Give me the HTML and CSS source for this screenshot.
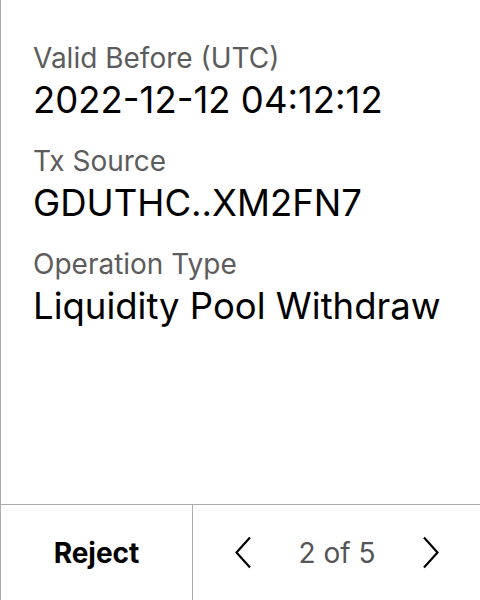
FILE: index.html
```html
<!DOCTYPE html>
<html>
<head>
<meta charset="utf-8">
<link rel="stylesheet" href="styles.css">
</head>
<body>
<div class="screen">
  <div class="details">
    <div class="field">
      <div class="label">Valid Before (UTC)</div>
      <div class="value">2022-12-12 04:12:12</div>
    </div>
    <div class="field">
      <div class="label">Tx Source</div>
      <div class="value">GDUTHC..XM2FN7</div>
    </div>
    <div class="field">
      <div class="label">Operation Type</div>
      <div class="value">Liquidity Pool Withdraw</div>
    </div>
  </div>
  <div class="footer">
    <div class="reject">Reject</div>
    <div class="pager">
      <svg class="chev" width="18" height="33" viewBox="0 0 18 33"><path d="M16 1.5 L2.5 16.5 L16 31.5" fill="none" stroke="#000" stroke-width="2.2"/></svg>
      <span class="count">2 of 5</span>
      <svg class="chev" width="18" height="33" viewBox="0 0 18 33"><path d="M2 1.5 L15.5 16.5 L2 31.5" fill="none" stroke="#000" stroke-width="2.2"/></svg>
    </div>
  </div>
</div>
</body>
</html>
```
FILE: styles.css
```css
html, body { margin: 0; padding: 0; background: #fff; }
body { font-family: Inter, "Noto Sans", sans-serif; }
.screen {
  width: 479px; height: 600px;
  border-left: 1px solid #ababab;
  display: flex; flex-direction: column;
}
.details {
  flex: 1;
  padding: 41px 0 0 32px;
  display: flex; flex-direction: column; gap: 22px;
}
.label { font-size: 28px; color: #5c5c5c; line-height: 34px; }
.value { font-size: 36.5px; color: #000; line-height: 44px; margin-top: 3px; }
.footer {
  height: 95px;
  border-top: 1px solid #ababab;
  display: flex;
}
.reject {
  width: 191px;
  border-right: 1px solid #ababab;
  display: flex; align-items: center; justify-content: center;
  font-size: 28px; font-weight: 700; color: #000;
}
.pager {
  flex: 1;
  display: flex; align-items: center; justify-content: space-between;
  padding: 0 40px 0 41px;
}
.count { font-size: 28px; color: #555; }
.chev { display: block; }
```
